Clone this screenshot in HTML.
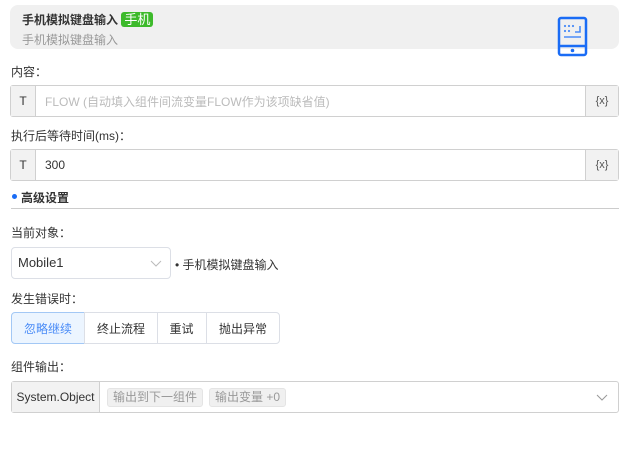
<!DOCTYPE html>
<html><head><meta charset="utf-8"><style>
*{box-sizing:border-box;margin:0;padding:0}
body{width:629px;height:465px;background:#fff;font-family:"Liberation Sans","Noto Sans CJK SC",sans-serif;font-size:12px;color:#333;position:relative;overflow:hidden}
.abs{position:absolute}
.head{left:10px;top:5px;width:609px;height:44px;background:#f0f0f0;border-radius:8px}
.lbl{left:11px;font-size:12px;color:#333}
.inp{left:10px;width:609px;height:32px;border:1px solid #d0d0d0;border-radius:3px;display:flex;font-size:12px}
.inp .t{width:25px;background:#f2f2f2;border-right:1px solid #d0d0d0;display:flex;align-items:center;justify-content:center;font-weight:normal}
.inp .m{flex:1;display:flex;align-items:center;padding-left:9px}
.inp .x{width:33px;background:#f2f2f2;border-left:1px solid #d0d0d0;display:flex;align-items:center;justify-content:center;color:#555;font-size:11px}
.btn{top:312px;height:32px;border:1px solid #dcdfe6;display:flex;align-items:center;justify-content:center;font-size:12px}
.tag{background:#f0f0f0;border:1px solid #e4e4e4;border-radius:3px;color:#999;padding:0 5px;height:19px;line-height:17px;margin-right:6px}
</style></head><body>
<div class="abs head"></div>
<div class="abs" style="left:22px;top:9px;font-weight:bold;font-size:12px;color:#333">手机模拟键盘输入 <span style="background:#3dba2b;color:#fff;border-radius:3px;padding:0 3px;font-weight:normal;font-size:13px">手机</span></div>
<div class="abs" style="left:22px;top:31px;color:#999">手机模拟键盘输入</div>
<svg class="abs" style="left:557px;top:16px" width="34" height="42" viewBox="0 0 34 42"><rect x="2" y="2" width="27" height="37" rx="2" fill="none" stroke="#1a6cf5" stroke-width="2.5"/><line x1="2" y1="30" x2="29" y2="30" stroke="#1a6cf5" stroke-width="2.5"/><circle cx="15.5" cy="34.5" r="1.8" fill="#1a6cf5"/><g fill="#4a8cf7"><circle cx="8" cy="10" r="1.1"/><circle cx="12" cy="10" r="1.1"/><circle cx="16" cy="10" r="1.1"/><circle cx="8" cy="15" r="1.1"/><circle cx="12" cy="15" r="1.1"/></g><path d="M23 10v6h-5M7 21h17" stroke="#4a8cf7" stroke-width="1.6" fill="none"/></svg>
<div class="abs lbl" style="top:63px">内容：</div>
<div class="abs inp" style="top:85px"><div class="t">T</div><div class="m" style="color:#bbb">FLOW (自动填入组件间流变量FLOW作为该项缺省值)</div><div class="x">{x}</div></div>
<div class="abs lbl" style="top:127px">执行后等待时间(ms)：</div>
<div class="abs inp" style="top:149px"><div class="t">T</div><div class="m">300</div><div class="x">{x}</div></div>
<div class="abs" style="left:12px;top:194px;width:5px;height:5px;border-radius:50%;background:#1a6cf5"></div>
<div class="abs" style="left:21px;top:189px;font-weight:bold">高级设置</div>
<div class="abs" style="left:11px;top:208px;width:608px;height:1px;background:#ccc"></div>
<div class="abs lbl" style="top:224px">当前对象：</div>
<div class="abs" style="left:11px;top:247px;width:160px;height:32px;border:1px solid #dcdfe6;border-radius:4px;padding:0 6px;line-height:30px;font-size:13px">Mobile1<svg style="position:absolute;right:8px;top:12px" width="12" height="7"><path d="M1 1l5 5 5-5" stroke="#bbb" fill="none"/></svg></div>
<div class="abs" style="left:175px;top:256px">• 手机模拟键盘输入</div>
<div class="abs lbl" style="top:290px">发生错误时：</div>
<div class="abs btn" style="left:11px;width:74px;background:#ecf5ff;border-color:#a3c8f5;color:#4a8cf7;border-radius:4px 0 0 4px">忽略继续</div>
<div class="abs btn" style="left:84px;width:74px">终止流程</div>
<div class="abs btn" style="left:157px;width:50px;border-left:none">重试</div>
<div class="abs btn" style="left:206px;width:74px;border-radius:0 4px 4px 0">抛出异常</div>
<div class="abs lbl" style="top:358px">组件输出：</div>
<div class="abs" style="left:11px;top:381px;width:608px;height:32px;border:1px solid #d0d0d0;border-radius:3px;display:flex;align-items:center">
<div style="width:88px;height:30px;background:#f2f2f2;border-right:1px solid #d0d0d0;line-height:30px;text-align:center">System.Object</div>
<div style="display:flex;padding-left:7px"><span class="tag">输出到下一组件</span><span class="tag">输出变量 +0</span></div>
<svg style="position:absolute;right:10px;top:12px" width="12" height="7"><path d="M1 1l5 5 5-5" stroke="#999" fill="none"/></svg>
</div>
</body></html>
